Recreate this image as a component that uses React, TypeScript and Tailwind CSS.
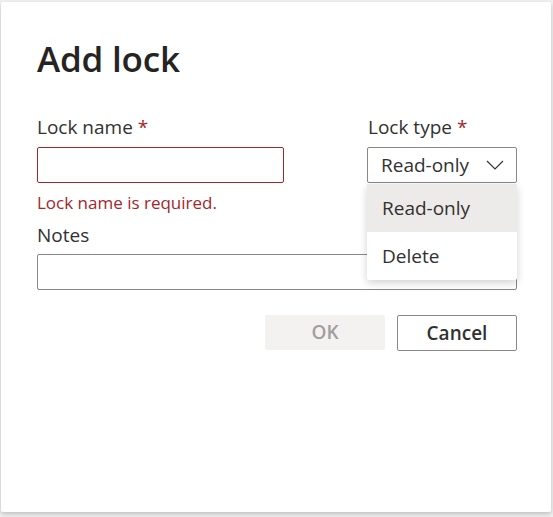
const font = { fontFamily: '"Open Sans", "Noto Sans", sans-serif' };

function Chevron() {
  return (
    <svg width="18" height="10" viewBox="0 0 18 10" fill="none" className="text-[#323130]">
      <polyline points="1,1 9,9 17,1" stroke="currentColor" strokeWidth="1.1" />
    </svg>
  );
}

function LockTypeMenu() {
  return (
    <div className="absolute left-[366px] top-[182px] w-[150px] bg-white rounded-[2px] shadow-[0_3px_8px_rgba(0,0,0,0.18)] z-10">
      <div className="h-[48px] flex items-center px-[15px] bg-[#edebe9] text-[19px] text-[#323130]">Read-only</div>
      <div className="h-[48px] flex items-center px-[15px] text-[19px] text-[#323130]">Delete</div>
    </div>
  );
}

export default function App() {
  return (
    <div className="w-[553px] h-[517px] bg-[#f1f1f1] pt-[2px] pl-[1px]" style={font}>
      <div className="relative w-[550px] h-[510px] bg-white rounded-[2px] shadow-[0_2px_5px_rgba(0,0,0,0.22)] pl-[36px] pr-[33px] pt-[33px]">
        <h1 className="text-[35px] leading-[48px] font-semibold text-[#252423] tracking-[-0.2px]">Add lock</h1>

        <div className="mt-[31px] flex gap-[83px]">
          <div className="w-[247px] flex flex-col">
            <label className="text-[19px] leading-[26px] text-[#323130]">
              Lock name <span className="text-[#a4262c]">*</span>
            </label>
            <div className="mt-[7px] h-[36px] border border-[#a4262c] rounded-[2px]" />
          </div>
          <div className="w-[150px] flex flex-col">
            <label className="text-[19px] leading-[26px] text-[#323130] pl-[1px]">
              Lock type <span className="text-[#a4262c]">*</span>
            </label>
            <div className="mt-[7px] h-[36px] border border-[#8a8886] rounded-[2px] flex items-center justify-between pl-[13px] pr-[12px]">
              <span className="text-[19px] text-[#323130]">Read-only</span>
              <Chevron />
            </div>
          </div>
        </div>

        <div className="mt-[9px] text-[17px] leading-[22px] text-[#a4262c]">Lock name is required.</div>

        <label className="block mt-[8px] text-[19px] leading-[26px] text-[#323130]">Notes</label>
        <div className="mt-[6px] h-[36px] w-[480px] border border-[#8a8886] rounded-[2px]" />

        <div className="mt-[25px] flex justify-end gap-[12px] w-[480px]">
          <button className="w-[120px] h-[35px] rounded-[2px] bg-[#f3f2f1] text-[19px] font-semibold text-[#a19f9d]">OK</button>
          <button className="w-[120px] h-[36px] rounded-[2px] border border-[#8a8886] bg-white text-[19px] font-semibold text-[#323130]">Cancel</button>
        </div>

        <LockTypeMenu />
      </div>
    </div>
  );
}
